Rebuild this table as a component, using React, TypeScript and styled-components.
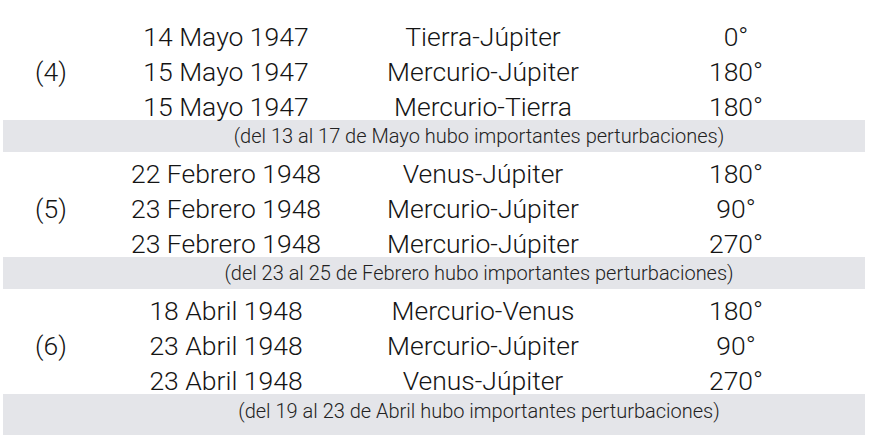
import React from "react";
import styled, { createGlobalStyle } from "styled-components";

const Global = createGlobalStyle`
  html, body { margin: 0; padding: 0; background: #ffffff; }
  body {
    font-family: Roboto, "Liberation Sans", Arial, sans-serif;
    color: #141414;
  }
`;

const COLS = "102px 248px 266px 240px";

const Page = styled.main`
  width: 870px;
  padding-top: 15px;
`;

const Group = styled.section`
  display: grid;
  grid-template-columns: ${COLS};
  grid-template-rows: repeat(3, 26px);
  row-gap: 9px;
  padding-top: 9px;
  font-size: 26.5px;
  font-weight: 300;
  line-height: 26px;
`;

const Label = styled.div`
  grid-column: 1;
  grid-row: 1 / 4;
  align-self: center;
  text-align: center;
`;

const Cell = styled.div<{ $col: number }>`
  grid-column: ${(p) => p.$col};
  text-align: center;
  white-space: nowrap;
`;

const NoteBar = styled.div<{ $tall?: boolean }>`
  display: grid;
  grid-template-columns: ${COLS};
  align-items: center;
  margin: 0 5px 0 3px;
  padding-left: 0;
  height: ${(p) => (p.$tall ? 41 : 32)}px;
  padding-bottom: ${(p) => (p.$tall ? 8 : 0)}px;
  box-sizing: border-box;
  background: #e4e5e9;
  font-size: 20px;
  font-weight: 300;
  color: #222;
`;

const NoteText = styled.div`
  grid-column: 2 / 5;
  text-align: center;
  white-space: nowrap;
  transform: translateX(-3px);
`;

type Row = [string, string, string];
type Data = { label: string; rows: Row[]; note: string };

const data: Data[] = [
  {
    label: "(4)",
    rows: [
      ["14 Mayo 1947", "Tierra-Júpiter", "0°"],
      ["15 Mayo 1947", "Mercurio-Júpiter", "180°"],
      ["15 Mayo 1947", "Mercurio-Tierra", "180°"],
    ],
    note: "(del 13 al 17 de Mayo hubo importantes perturbaciones)",
  },
  {
    label: "(5)",
    rows: [
      ["22 Febrero 1948", "Venus-Júpiter", "180°"],
      ["23 Febrero 1948", "Mercurio-Júpiter", "90°"],
      ["23 Febrero 1948", "Mercurio-Júpiter", "270°"],
    ],
    note: "(del 23 al 25 de Febrero hubo importantes perturbaciones)",
  },
  {
    label: "(6)",
    rows: [
      ["18 Abril 1948", "Mercurio-Venus", "180°"],
      ["23 Abril 1948", "Mercurio-Júpiter", "90°"],
      ["23 Abril 1948", "Venus-Júpiter", "270°"],
    ],
    note: "(del 19 al 23 de Abril hubo importantes perturbaciones)",
  },
];

export default function App() {
  return (
    <>
      <Global />
      <Page>
        {data.map((g, gi) => (
          <React.Fragment key={g.label}>
            <Group>
              <Label>{g.label}</Label>
              {g.rows.map((r, ri) => (
                <React.Fragment key={ri}>
                  <Cell $col={2} style={{ gridRow: ri + 1 }}>{r[0]}</Cell>
                  <Cell $col={3} style={{ gridRow: ri + 1 }}>{r[1]}</Cell>
                  <Cell $col={4} style={{ gridRow: ri + 1 }}>{r[2]}</Cell>
                </React.Fragment>
              ))}
            </Group>
            <NoteBar $tall={gi === data.length - 1}>
              <NoteText>{g.note}</NoteText>
            </NoteBar>
          </React.Fragment>
        ))}
      </Page>
    </>
  );
}
